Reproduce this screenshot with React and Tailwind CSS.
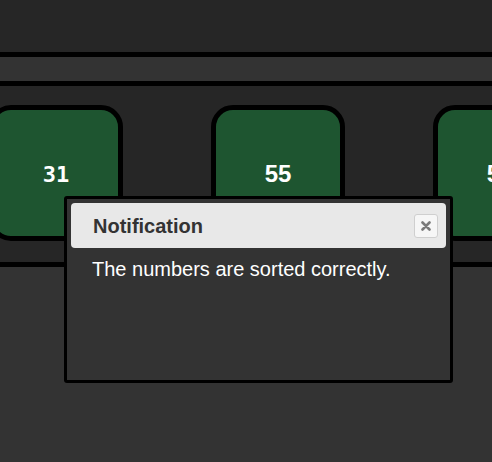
import React from 'react'

const tiles = [
  { value: 31, mono: true },
  { value: 55, mono: false },
  { value: 57, mono: false },
]

const Tile = ({ value, mono }) => (
  <div className="w-[134px] h-[136px] shrink-0 rounded-[22px] border-[5px] border-black bg-[#1e5530] flex items-center justify-center">
    {mono ? (
      <span className="text-white font-bold text-[22px] font-['DejaVu_Sans_Mono',monospace] mt-[2px]">{value}</span>
    ) : (
      <span className="text-white font-bold text-[24px] mt-[1px]">{value}</span>
    )}
  </div>
)

const App = () => {
  return (
    <div className="relative w-[492px] h-[462px] overflow-hidden bg-[#333333] font-['Liberation_Sans',Arial,sans-serif]">
      <div className="h-[52px] bg-[#262626]"></div>
      <div className="h-[34px] border-y-[5px] border-black bg-[#333333]"></div>
      <div className="h-[181px] border-b-[5px] border-black bg-[#262626] pt-[19px] overflow-hidden">
        <div className="flex gap-[88px] ml-[-11px]">
          {tiles.map((t) => (
            <Tile key={t.value} value={t.value} mono={t.mono} />
          ))}
        </div>
      </div>

      {/* notification dialog */}
      <div className="absolute left-[64px] top-[196px] w-[389px] h-[187px] border-[3px] border-black rounded-[3px] bg-[#333333] p-[4px]">
        <div className="h-[45px] rounded-[4px] bg-[#e8e8e8] flex items-center justify-between pl-[22px] pr-[8px]">
          <span className="text-[20px] font-bold text-[#333333]">Notification</span>
          <button className="w-[24px] h-[24px] rounded-[3px] border border-[#cfcfcf] bg-[#f6f6f6] flex items-center justify-center">
            <svg width="10" height="10" viewBox="0 0 10 10">
              <path d="M1.5 1.5 L8.5 8.5 M8.5 1.5 L1.5 8.5" stroke="#7a7a7a" strokeWidth="2.6" strokeLinecap="round" />
            </svg>
          </button>
        </div>
        <p className="pl-[21px] pt-[10px] text-[20px] leading-[23px] text-white">
          The numbers are sorted correctly.
        </p>
      </div>
    </div>
  )
}

export default App
